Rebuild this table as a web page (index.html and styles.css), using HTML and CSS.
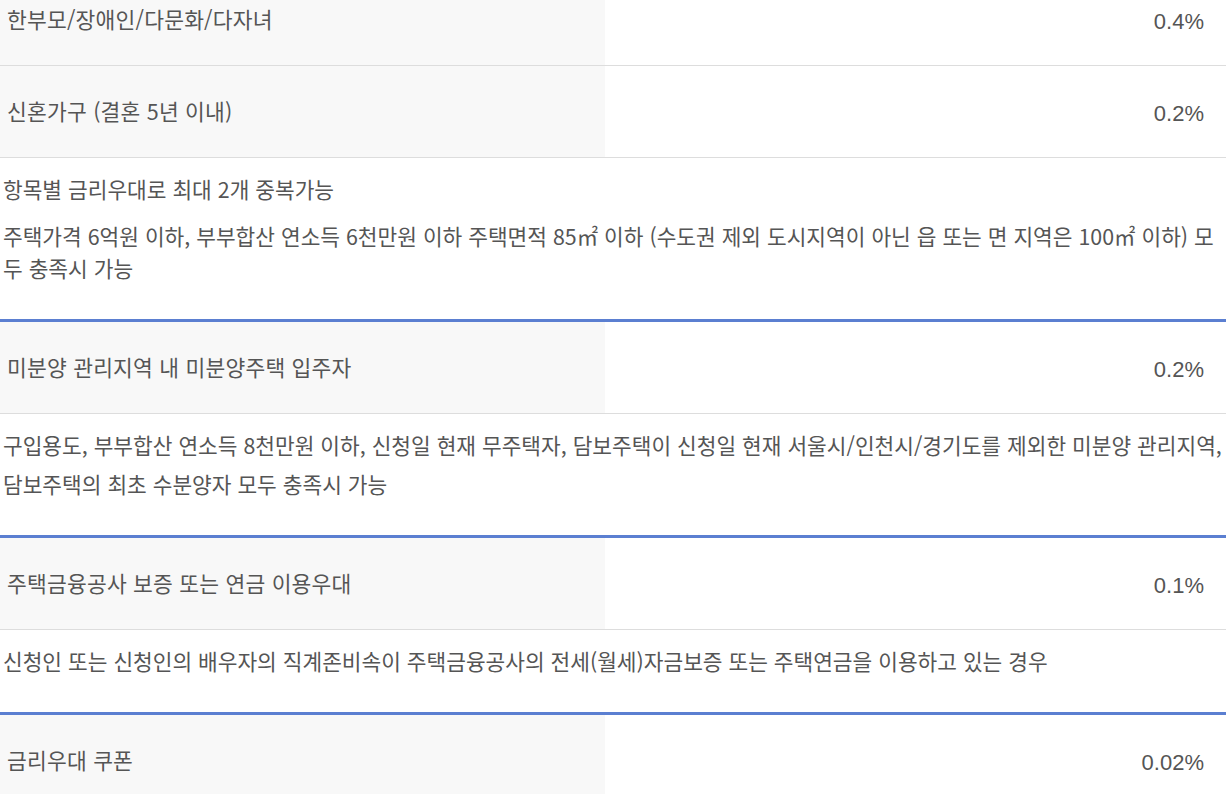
FILE: index.html
```html
<!DOCTYPE html>
<html lang="ko">
<head>
<meta charset="utf-8">
<title>금리우대</title>
<link rel="stylesheet" href="styles.css">
</head>
<body>
<div class="rates">
  <div class="rate-row">
    <div class="rate-label">한부모/장애인/다문화/다자녀</div>
    <div class="rate-value">0.4%</div>
  </div>
  <div class="rate-row">
    <div class="rate-label">신혼가구 (결혼 5년 이내)</div>
    <div class="rate-value">0.2%</div>
  </div>
  <div class="rate-note">
    <p>항목별 금리우대로 최대 2개 중복가능</p>
    <p>주택가격 6억원 이하, 부부합산 연소득 6천만원 이하 주택면적 85㎡ 이하 (수도권 제외 도시지역이 아닌 읍 또는 면 지역은 100㎡ 이하) 모두 충족시 가능</p>
  </div>
  <div class="rate-row">
    <div class="rate-label">미분양 관리지역 내 미분양주택 입주자</div>
    <div class="rate-value">0.2%</div>
  </div>
  <div class="rate-note rate-note-tight">
    <p>구입용도, 부부합산 연소득 8천만원 이하, 신청일 현재 무주택자, 담보주택이 신청일 현재 서울시/인천시/경기도를 제외한 미분양 관리지역,</p>
    <p>담보주택의 최초 수분양자 모두 충족시 가능</p>
  </div>
  <div class="rate-row">
    <div class="rate-label">주택금융공사 보증 또는 연금 이용우대</div>
    <div class="rate-value">0.1%</div>
  </div>
  <div class="rate-note">
    <p>신청인 또는 신청인의 배우자의 직계존비속이 주택금융공사의 전세(월세)자금보증 또는 주택연금을 이용하고 있는 경우</p>
  </div>
  <div class="rate-row">
    <div class="rate-label">금리우대 쿠폰</div>
    <div class="rate-value">0.02%</div>
  </div>
</div>
</body>
</html>
```
FILE: styles.css
```css
html, body {
  margin: 0;
  padding: 0;
  background: #ffffff;
}

body {
  font-family: "Noto Sans CJK KR", "Noto Sans", sans-serif;
  color: #555555;
  overflow: hidden;
}

.rates {
  margin-top: -26px;
  width: 1226px;
}

.rate-row {
  display: grid;
  grid-template-columns: 605px 1fr;
  height: 91px;
  border-bottom: 1px solid #dddddd;
}

.rate-label {
  background: #f8f8f8;
  display: flex;
  align-items: center;
  padding: 0 0 3px 7px;
  font-size: 21.5px;
  letter-spacing: 0.2px;
}

.rate-value {
  display: flex;
  align-items: center;
  justify-content: flex-end;
  padding: 5px 22px 0 0;
  font-family: "Liberation Sans", Arial, sans-serif;
  font-size: 22px;
}

.rate-note {
  padding: 15px 0 35px 3px;
  border-bottom: 3px solid #5b7fd1;
  font-size: 21.4px;
  line-height: 32px;
}

.rate-note p {
  margin: 0;
}

.rate-note p + p {
  margin-top: 15px;
}

.rate-note-tight p + p {
  margin-top: 7px;
}
```
